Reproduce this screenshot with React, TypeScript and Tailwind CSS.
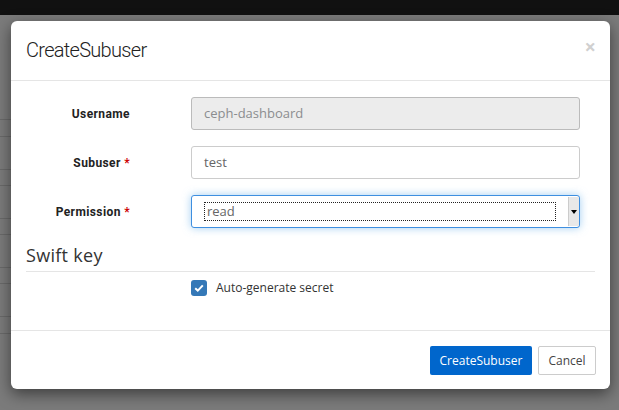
import React from "react";

const font = { fontFamily: '"Open Sans", "Liberation Sans", sans-serif' };
const narrow = { fontFamily: 'Roboto, "Liberation Sans", sans-serif' };

const FieldRow = ({
  label,
  required,
  children,
}: {
  label: string;
  required?: boolean;
  children: React.ReactNode;
}) => (
  <div className="flex items-center h-[33px]">
    <div className="w-[104px] text-right text-[12px] font-bold text-[#222] tracking-[0.4px]" style={narrow}>
      {label}
      {required && <span className="text-[#c00]"> *</span>}
    </div>
    <div className="ml-[61px] w-[389px] h-full">{children}</div>
  </div>
);

const App: React.FC = () => {
  return (
    <div className="relative w-[619px] h-[410px] overflow-hidden bg-[#7b7b7b]" style={font}>
      {/* page behind the overlay */}
      <div className="h-[15px] bg-[#111]" />
      <div className="flex flex-col w-[232px] pt-[54px]">
        {[51, 17, 33, 16, 33, 16, 33, 16, 33, 17, 85].map((h, i) => (
          <div key={i} className="border-b border-[#6a6a6a]" style={{ height: h }} />
        ))}
      </div>

      {/* modal */}
      <div className="absolute left-[11px] top-[21px] w-[599px] bg-white rounded-[6px] shadow-[0_5px_15px_rgba(0,0,0,0.5)]">
        <div className="flex items-start justify-between h-[60px] px-[15px] pt-[14px] border-b border-[#e5e5e5]">
          <h4 className="text-[20px] text-[#222] font-light tracking-[-0.7px]" style={narrow}>
            CreateSubuser
          </h4>
          <span className="text-[20px] leading-none font-bold text-[#d0d0d0] mt-[2px] -mr-[1px]">×</span>
        </div>

        <div className="px-[15px] pt-[16px] pb-[33px]">
          <div className="flex flex-col gap-[16px]">
            <FieldRow label="Username">
              <div className="h-full flex items-center px-[12px] border border-[#bbb] rounded-[3px] bg-[#ececec] text-[13px] text-[#8b8d8f]">
                ceph-dashboard
              </div>
            </FieldRow>
            <FieldRow label="Subuser" required>
              <div className="h-full flex items-center px-[12px] border border-[#ccc] rounded-[3px] bg-white text-[13px] text-[#666]">
                test
              </div>
            </FieldRow>
            <FieldRow label="Permission" required>
              <div className="h-full flex items-stretch border border-[#3e8fe0] rounded-[3px] bg-white shadow-[0_0_8px_rgba(102,175,233,0.6)]">
                <div className="flex-1 flex items-center pl-[12px] pr-[12px] py-[6px]">
                  <div className="flex-1 h-full flex items-center pl-[2px] border border-dotted border-[#222] text-[13px] text-[#666]">
                    read
                  </div>
                </div>
                <div className="w-[11px] my-[1px] bg-[#e8e8e8] border-l border-[#ccc] flex items-center justify-center">
                  <div className="w-0 h-0 border-l-[3px] border-r-[3px] border-t-[4px] border-l-transparent border-r-transparent border-t-black" />
                </div>
              </div>
            </FieldRow>
          </div>

          <div className="mt-[15px] pb-[4px] border-b border-[#e5e5e5]">
            <h3 className="text-[18px] text-[#333] tracking-[0.3px] leading-[24px]">Swift key</h3>
          </div>

          <div className="flex items-center mt-[7px] ml-[165px]">
            <div className="w-[16px] h-[16px] rounded-[3px] bg-[#3478b7] flex items-center justify-center">
              <svg width="10" height="8" viewBox="0 0 10 8">
                <path d="M1.2 4.2 L3.8 6.6 L8.8 1.4" fill="none" stroke="white" strokeWidth="2" />
              </svg>
            </div>
            <span className="ml-[9px] text-[12px] text-[#333]">Auto-generate secret</span>
          </div>
        </div>

        <div className="flex justify-end gap-[6px] px-[14px] pt-[15px] pb-[14px] border-t border-[#e5e5e5]">
          <button className="h-[29px] w-[102px] rounded-[2px] bg-[#0066cc] text-white text-[12px]">
            CreateSubuser
          </button>
          <button className="h-[29px] w-[58px] rounded-[2px] border border-[#ccc] bg-white text-[#444] text-[12px]">
            Cancel
          </button>
        </div>
      </div>
    </div>
  );
};

export default App;
